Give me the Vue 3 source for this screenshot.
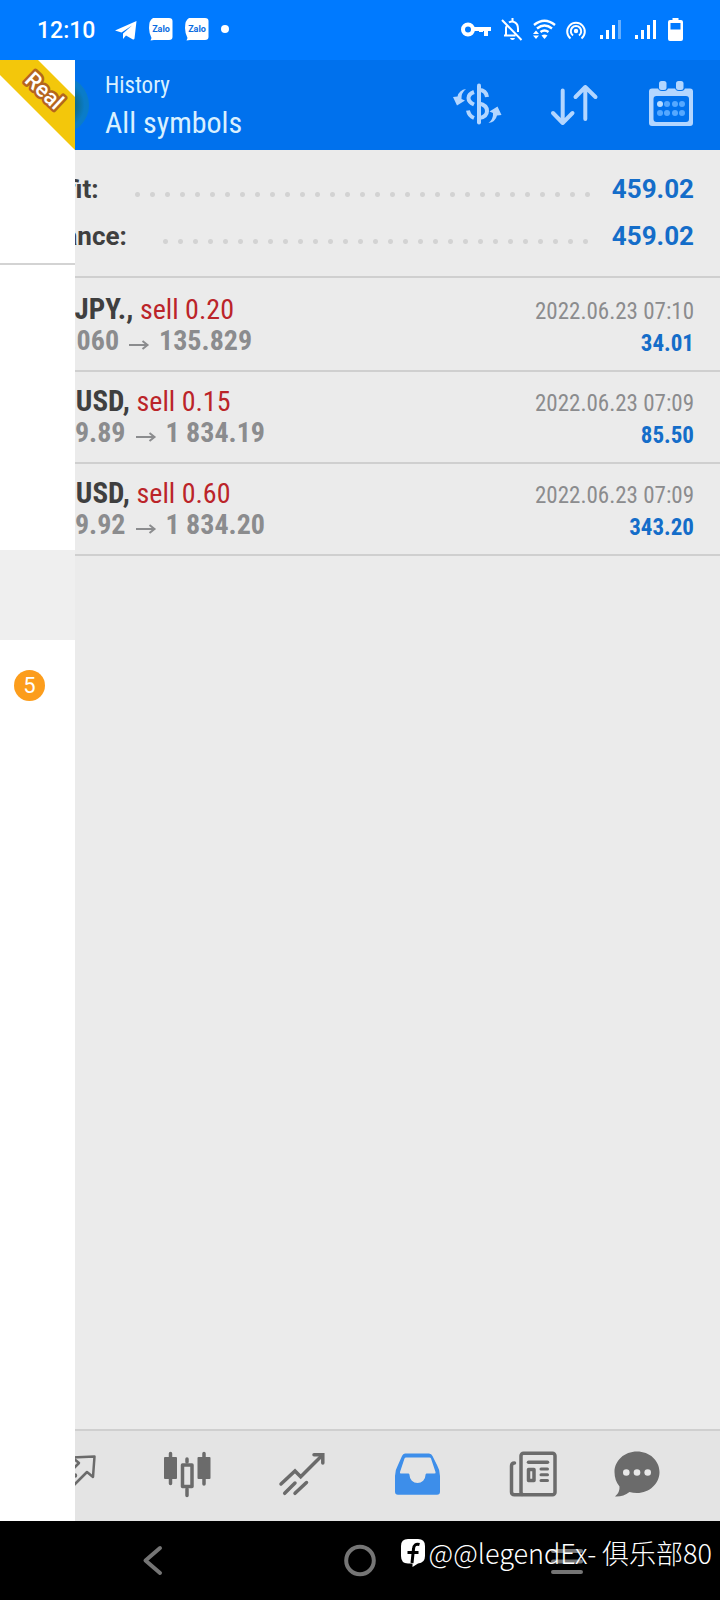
<script setup>
const summary = [
  { label: 'Profit:', value: '459.02' },
  { label: 'Balance:', value: '459.02' }
]

const deals = [
  { symbol: 'USDJPY.', side: 'sell 0.20', open: '136.060', close: '135.829', time: '2022.06.23 07:10', profit: '34.01' },
  { symbol: 'XAUUSD', side: 'sell 0.15', open: '1 839.89', close: '1 834.19', time: '2022.06.23 07:09', profit: '85.50' },
  { symbol: 'XAUUSD', side: 'sell 0.60', open: '1 839.92', close: '1 834.20', time: '2022.06.23 07:09', profit: '343.20' }
]

const drawerItems = [
  { label: 'Quotes' },
  { label: 'Charts' },
  { label: 'Trade' },
  { label: 'History', active: true },
  { label: 'Mailbox', badge: '5' }
]

const calendarDots = [
  [13, 23], [20, 23], [28, 23], [35, 23],
  [13, 32], [20, 32], [28, 32], [35, 32]
]
</script>

<template>
  <div class="phone">
    <div class="status">
      <div class="status-left">
        <span class="clock">12:10</span>
        <svg width="22" height="24" viewBox="0 0 22 24"><path d="M0 12.500L21.500 3L19.500 20.500Q19 22 17.500 21.200L11 17.500L8 21V15.500L17 7.500L6.500 14.500Z" fill="#fff" /></svg>
        <svg v-for="n in 2" :key="n" width="24" height="24" viewBox="0 0 24 24">
          <path d="M4 0H20Q23.500 0 23.500 3V19Q23.500 22 20 22H5L1.500 22.500L2.500 20Q0 15 0 10Q0 2 4 0Z" fill="#fff" />
          <text x="12" y="14" text-anchor="middle" class="zalo">Zalo</text>
        </svg>
        <svg width="8" height="24" viewBox="0 0 8 24"><circle cx="4" cy="11" r="4" fill="#fff" /></svg>
      </div>
      <div class="status-right">
        <svg width="30" height="24" viewBox="0 0 30 24" fill="none" stroke="#fff">
          <circle cx="7" cy="11.500" r="5" stroke-width="4" /><path d="M12 11H30M25 11V18M20 11V14" stroke-width="4" />
        </svg>
        <svg width="22" height="24" viewBox="0 0 22 24" fill="none" stroke="#fff" stroke-width="2">
          <path d="M1 2L20.500 22M3 17.500H14.500M5 17.500V11Q5 8.500 6.200 7M8 4.500Q11 2.500 14 4.500Q17 6 17 11V14M11.500 0V4" /><path d="M9 20H14Q13.500 22 11.500 22T9 20" fill="#fff" stroke="none" />
        </svg>
        <svg width="23" height="24" viewBox="0 0 23 24" fill="none" stroke="#fff" stroke-width="2.400">
          <path d="M1 7Q11.500 -1.500 22 7M4 10.500Q11.500 4.500 19 10.500M7.500 14Q11.500 11 15.500 14" />
          <path d="M8.500 17.500Q11.500 15.500 14.500 17.500L11.500 21Z" fill="#fff" stroke="none" />
          <path d="M0 16L3 12.500L6 16ZM0 17.500H6L3 21Z" fill="#fff" stroke="none" />
        </svg>
        <svg width="20" height="24" viewBox="0 0 20 24" fill="none" stroke="#fff" stroke-width="2">
          <circle cx="10" cy="13" r="2.200" fill="#fff" stroke="none" />
          <path d="M7 17.500A5.200 5.200 0 1 1 13 17.500M4.500 20.500A8.800 8.800 0 1 1 15.500 20.500" />
        </svg>
        <svg v-for="n in 2" :key="n" class="signal" width="21" height="24" viewBox="0 0 21 24" fill="#fff">
          <path d="M0 17h3v4H0zM6 12h3v9H6zM12 7h3v14h-3z" /><path d="M18 2h3v19h-3z" :opacity="n === 1 ? 0.4 : 1" />
        </svg>
        <svg class="battery" width="15" height="24" viewBox="0 0 15 24">
          <path d="M4.500 0H10.500V2H13Q15 2 15 4V21Q15 23 13 23H2Q0 23 0 21V4Q0 2 2 2H4.500ZM2.500 5V11.500H12.500V5Z" fill="#fff" fill-rule="evenodd" />
        </svg>
      </div>
    </div>

    <div class="app">
      <header class="header">
        <span class="avatar"></span>
        <div class="titles">
          <div class="subtitle">History</div>
          <h1 class="title">All symbols</h1>
        </div>
        <div class="actions">
          <button type="button" aria-label="Currency">
            <svg width="48" height="48" viewBox="0 0 48 48" fill="none" stroke="#b3d6ff" stroke-width="4">
              <path d="M26 4.500V41.500" stroke-linecap="round" />
              <path d="M26 9Q33 9 34 16M26 22.500Q34 24 34 30Q34 36 26 37M21 11Q15.500 13 15.500 17Q15.500 21 21 23.500M15 29.500Q16 35 21 37" />
              <path d="M13 8Q6 9 4.500 15.500L0 16L4 24.500L12 19.500L8.500 18Q8 12 13 8ZM35.500 42Q42.500 41 44 34.500L48.500 34L44.500 25.500L36.500 30.500L40 32Q40.500 38 35.500 42Z" fill="#b3d6ff" stroke="none" />
            </svg>
          </button>
          <button type="button" aria-label="Sort">
            <svg width="48" height="48" viewBox="0 0 48 48" fill="none" stroke="#b3d6ff" stroke-width="4" stroke-linecap="round" stroke-linejoin="round">
              <path d="M12.700 9.500V42M3 32L12.700 42L22.500 32M35.300 38V6M25.500 16L35.300 6L45.500 16" />
            </svg>
          </button>
          <button type="button" aria-label="Period">
            <svg width="48" height="48" viewBox="0 0 48 48">
              <path d="M5 7.500H43Q46 7.500 46 10.500V42Q46 45 43 45H5Q2 45 2 42V10.500Q2 7.500 5 7.500ZM9.500 15Q6.500 15 6.500 18V38Q6.500 41 9.500 41H39Q42 41 42 38V18Q42 15 39 15Z" fill="#b3d6ff" fill-rule="evenodd" />
              <rect x="11" y="-1" width="10" height="11" rx="4" fill="#0071ed" /><rect x="28" y="-1" width="10" height="11" rx="4" fill="#0071ed" />
              <rect x="12" y="0" width="7.500" height="9" rx="2.500" fill="#b3d6ff" /><rect x="29" y="0" width="7.500" height="9" rx="2.500" fill="#b3d6ff" />
              <circle v-for="(d, i) in calendarDots" :key="i" :cx="d[0]" :cy="d[1]" r="3" :fill="i === 0 ? '#b9dcff' : '#55a8ff'" />
            </svg>
          </button>
        </div>
      </header>

      <main class="content">
        <section class="summary">
          <div v-for="row in summary" :key="row.label" class="summary-row">
            <span class="summary-label">{{ row.label }}</span>
            <span class="leader"></span>
            <span class="summary-value">{{ row.value }}</span>
          </div>
        </section>
        <ul class="deals">
          <li v-for="(d, i) in deals" :key="i" class="deal">
            <div class="deal-main">
              <div class="deal-name"><b>{{ d.symbol }},</b> <span class="side">{{ d.side }}</span></div>
              <div class="deal-price">
                <span>{{ d.open }}</span>
                <svg width="20" height="12" viewBox="0 0 20 12" fill="none" stroke="#8b8c8e" stroke-width="2"><path d="M0 6H18M13.500 2L18.500 6L13.500 10" /></svg>
                <span>{{ d.close }}</span>
              </div>
            </div>
            <div class="deal-side">
              <div class="deal-time">{{ d.time }}</div>
              <div class="deal-profit">{{ d.profit }}</div>
            </div>
          </li>
        </ul>
      </main>

      <nav class="tabs">
        <button type="button" aria-label="Quotes">
          <svg width="48" height="48" viewBox="0 0 48 48" fill="none" stroke="#6b6b6b" stroke-width="2.500" stroke-linejoin="round">
            <path d="M24 5.500L46.500 4.500L45 25L39 20L19 40" /><path d="M25 6L31 11L26 16" /><circle cx="27" cy="23.500" r="1" />
          </svg>
        </button>
        <button type="button" aria-label="Charts">
          <svg width="48" height="48" viewBox="0 0 48 48" fill="#6b6b6b" stroke="#6b6b6b">
            <path d="M7.500 1.500V31.500M24 7V10M24 37V43.500M41 1.500V32" stroke-width="3.500" stroke-linecap="round" />
            <rect x="1" y="5" width="13" height="22" rx="1" stroke="none" />
            <rect x="34.500" y="5" width="13" height="22" rx="1" stroke="none" />
            <rect x="19.500" y="13" width="9.500" height="21.500" fill="none" stroke-width="3.500" stroke-linejoin="round" />
          </svg>
        </button>
        <button type="button" aria-label="Trade">
          <svg width="48" height="48" viewBox="0 0 48 48" fill="none" stroke="#6b6b6b" stroke-width="3.500" stroke-linecap="round">
            <path d="M3 32L17 19L22.700 24.700L44 3.500M6.700 41.300L17 31M17 41.300L28.500 30.500" />
            <path d="M36 2.800H44.800V11" />
          </svg>
        </button>
        <button type="button" aria-label="History" aria-current="page">
          <svg width="48" height="48" viewBox="0 0 48 48">
            <path d="M11 1.500H35Q37.500 1.500 38.500 4L43 13Q46 18 46 24V39.500Q46 42.700 43 42.700H4Q1 42.700 1 39.500V24Q1 18 4 13L8 4Q9 1.500 11 1.500ZM12 5.500Q11 5.500 10.500 6.500L6 20Q5.500 21.500 7 21.500H14.500Q15.500 21.500 15.500 23A8 8 0 0 0 31.500 23Q31.500 21.500 32.500 21.500H40.500Q42 21.500 41.500 20L37 6.500Q36.600 5.500 35.500 5.500Z" fill="#3d8eea" fill-rule="evenodd" />
          </svg>
        </button>
        <button type="button" aria-label="News">
          <svg width="48" height="48" viewBox="0 0 48 48" fill="none" stroke="#6b6b6b" stroke-width="3.500" stroke-linecap="round">
            <rect x="12" y="1.200" width="34" height="41.500" rx="2.500" /><path d="M5.500 11Q2.500 11 2.500 14V40Q2.500 42.700 5.500 42.700H13" />
            <path d="M19.500 10.200H38.500" /><path d="M32 17H38.500M32 22.700H38.500M32 28.400H38.500" stroke-width="3" />
            <rect x="19.500" y="17.500" width="5.500" height="11" stroke-linejoin="round" />
          </svg>
        </button>
        <button type="button" aria-label="Chat">
          <svg width="48" height="48" viewBox="0 0 48 48">
            <path d="M24 -.5C36.500 -.5 46.500 8.500 46.500 20S36.500 41 24 41Q20 41 16.500 40Q10 45 2 44.500Q7 40.500 6.500 34.500Q1.500 28.500 1.500 20C1.500 8.500 11.500 -.5 24 -.5Z" fill="#6b6b6b" />
            <circle cx="13.300" cy="20.500" r="3.300" fill="#e8e8e8" /><circle cx="24" cy="20.500" r="3.300" fill="#e8e8e8" /><circle cx="34.700" cy="20.500" r="3.300" fill="#e8e8e8" />
          </svg>
        </button>
      </nav>

      <aside class="drawer">
        <div class="account">
          <svg width="75" height="90" viewBox="0 0 75 90">
            <path d="M0 0H38L75 37V90L0 15Z" fill="#f3c70b" />
            <text class="ribbon" x="44" y="38" text-anchor="middle" transform="rotate(43 44 31)">Real</text>
          </svg>
        </div>
        <ul class="menu">
          <li v-for="item in drawerItems" :key="item.label" :class="{ active: item.active }">
            <span v-if="item.badge" class="badge">{{ item.badge }}</span>
          </li>
        </ul>
      </aside>
    </div>

    <footer class="system">
      <button type="button" aria-label="Back">
        <svg width="32" height="32" viewBox="0 0 32 32" fill="none" stroke="#757575" stroke-width="4" stroke-linecap="round" stroke-linejoin="round"><path d="M23 3L8.500 15.500L23 28" /></svg>
      </button>
      <button type="button" aria-label="Home">
        <svg width="32" height="32" viewBox="0 0 32 32" fill="none" stroke="#757575" stroke-width="4"><circle cx="16" cy="15.500" r="13.800" /></svg>
      </button>
      <button type="button" aria-label="Recent">
        <svg width="32" height="32" viewBox="0 0 32 32" fill="none" stroke="#757575" stroke-width="4" stroke-linecap="round"><path d="M2 6H30M2 16.500H30M2 27H30" /></svg>
      </button>
      <div class="credit">
        <svg width="24" height="28" viewBox="0 0 24 28">
          <path d="M7 0H17Q24 0 24 7V17Q24 24 17 24.500L11.500 28V24.500H7Q0 24.500 0 17V7Q0 0 7 0Z" fill="#fff" />
          <path d="M18.500 5.500Q13 4 12.500 10L11 24M6.500 13.500H17.500" fill="none" stroke="#000" stroke-width="3" />
        </svg>
        <span>@@legendEx- 俱乐部80</span>
      </div>
    </footer>
  </div>
</template>

<style>
body {
  margin: 0;
  background: #ebebeb;
}
</style>

<style scoped>
.phone {
  min-height: 100vh;
  display: flex;
  flex-direction: column;
  font-family: "Roboto Condensed", Roboto, sans-serif;
}
button {
  padding: 0;
  border: 0;
  background: none;
  display: grid;
  place-items: center;
}
svg {
  display: block;
  flex: none;
  overflow: visible;
}
ul {
  list-style: none;
  margin: 0;
  padding: 0;
}
.status {
  height: 60px;
  flex: none;
  display: flex;
  align-items: center;
  justify-content: space-between;
  padding: 0 37px;
  background: #007aff;
  color: #fff;
}
.status-left,
.status-right {
  display: flex;
  align-items: center;
}
.status-left {
  gap: 12px;
}
.clock {
  font: 500 23px/28px Roboto, sans-serif;
  margin-right: 8px;
  padding-top: 2px;
}
.zalo {
  font: 700 9px Roboto, sans-serif;
  fill: #0a6be0;
}
.status-right {
  gap: 10px;
}
.signal {
  margin-left: 4px;
}
.battery {
  margin-left: 2px;
}
.app {
  position: relative;
  flex: 1;
  display: flex;
  flex-direction: column;
}
.header {
  height: 90px;
  flex: none;
  display: flex;
  align-items: center;
  padding: 0 25px 0 31px;
  background: #0071ed;
  color: #d9f0ff;
}
.avatar {
  width: 58px;
  height: 58px;
  border-radius: 50%;
  background: radial-gradient(circle, #0d6a86 36%, #0a7cc8 60%);
}
.titles {
  margin-left: 16px;
}
.subtitle {
  font-size: 23px;
  line-height: 36px;
}
.title {
  margin: 0;
  font-size: 30px;
  line-height: 38px;
  font-weight: 400;
}
.actions {
  margin-left: auto;
  display: flex;
  gap: 49px;
}
.content {
  flex: 1;
  background: #ebebeb;
}
.summary {
  padding: 16px 26px;
  border-bottom: 2px solid #cfcfcf;
}
.summary-row {
  display: flex;
  align-items: center;
  height: 47px;
  font: 700 26px/47px Roboto, sans-serif;
}
.summary-label {
  color: #3f3f3f;
}
.leader {
  flex: 1;
  height: 5px;
  margin: 10px 16px 0 31px;
  background: radial-gradient(circle, #d3d3d3 2px, transparent 3px) 0 0 / 15px 5px repeat-x;
}
.summary-value,
.deal-profit {
  color: #146dc9;
}
.deals {
  padding-top: 2px;
}
.deal {
  display: flex;
  justify-content: space-between;
  height: 64px;
  padding: 13px 26px;
  border-bottom: 2px solid #cfcfcf;
  white-space: nowrap;
}
.deal-name {
  height: 32px;
  font-size: 29px;
  line-height: 32px;
  color: #3f3f3f;
}
.side {
  font-size: 28px;
  color: #bb2429;
}
.deal-price {
  display: flex;
  align-items: center;
  gap: 10px;
  font-size: 28px;
  line-height: 32px;
  color: #8b8c8e;
  font-weight: 700;
}
.deal-price svg {
  margin-top: 8px;
}
.deal-side {
  text-align: right;
  font-size: 23px;
  line-height: 32px;
  padding-top: 3px;
}
.deal-time {
  color: #8b8c8e;
}
.deal-profit {
  font-weight: 700;
}
.tabs {
  display: grid;
  grid-template-columns: repeat(5, 5fr) 4fr;
  align-items: center;
  height: 90px;
  padding: 0 37px 0 14px;
  border-top: 2px solid #cfcfcf;
  background: #e4e4e4;
}
.drawer {
  position: absolute;
  left: 0;
  top: 0;
  bottom: 0;
  width: 75px;
  overflow: hidden;
  background: #fff;
}
.account {
  height: 203px;
  border-bottom: 2px solid #d3d3d3;
}
.ribbon {
  font: 500 22px Roboto, sans-serif;
  fill: #fff;
  stroke: #b5651d;
  stroke-width: 5px;
  stroke-linejoin: round;
  paint-order: stroke;
}
.menu {
  padding-top: 15px;
}
.menu li {
  height: 90px;
  display: flex;
  align-items: center;
  padding-left: 14px;
}
.menu .active {
  background: #efefef;
}
.badge {
  width: 31px;
  height: 31px;
  border-radius: 50%;
  background: #fc9d1c;
  color: #fff;
  font: 400 22px/31px Roboto, sans-serif;
  text-align: center;
}
.system {
  position: relative;
  flex: none;
  height: 79px;
  display: grid;
  grid-template-columns: repeat(3, 1fr);
  align-items: center;
  padding: 0 49px;
  background: #000;
}
.credit {
  position: absolute;
  right: 8px;
  top: 13px;
  display: flex;
  align-items: center;
  gap: 4px;
  color: #fff;
  font: 300 27px/38px "Noto Sans CJK SC", sans-serif;
  white-space: nowrap;
}
</style>
